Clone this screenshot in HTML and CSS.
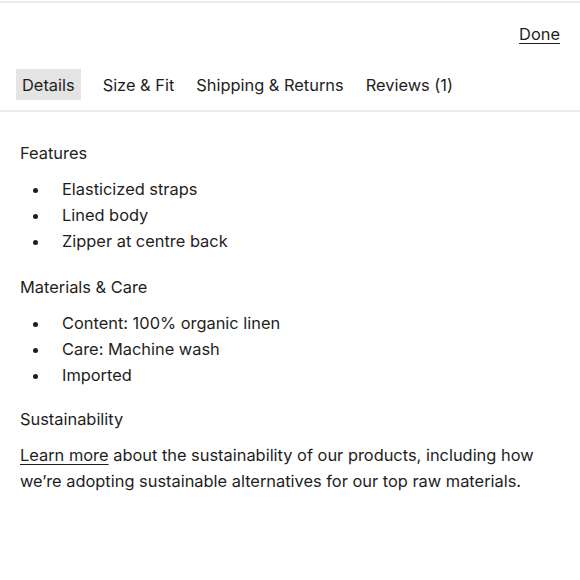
FILE: index.html
```html
<!DOCTYPE html>
<html lang="en">
<head>
<meta charset="utf-8">
<link rel="stylesheet" href="styles.css">
</head>
<body>
<div class="sheet">
  <div class="topbar">
    <a class="done" href="#">Done</a>
  </div>
  <nav class="tabs">
    <span class="tab active">Details</span>
    <span class="tab">Size &amp; Fit</span>
    <span class="tab">Shipping &amp; Returns</span>
    <span class="tab">Reviews (1)</span>
  </nav>
  <main class="content">
    <h3 class="heading">Features</h3>
    <ul class="list">
      <li>Elasticized straps</li>
      <li>Lined body</li>
      <li>Zipper at centre back</li>
    </ul>
    <h3 class="heading">Materials &amp; Care</h3>
    <ul class="list list-last">
      <li>Content: 100% organic linen</li>
      <li>Care: Machine wash</li>
      <li>Imported</li>
    </ul>
    <h3 class="heading">Sustainability</h3>
    <p class="para"><a href="#" class="link">Learn more</a> about the sustainability of our products, including how we’re adopting sustainable alternatives for our top raw materials.</p>
  </main>
</div>
</body>
</html>
```
FILE: styles.css
```css
html, body {
  margin: 0;
  padding: 0;
  background: #ffffff;
}
body {
  font-family: Inter, "Noto Sans", sans-serif;
  font-size: 16.4px;
  color: #1e1e1e;
}
.sheet {
  border-top: 2px solid #ebebeb;
  margin-top: 1px;
}
.topbar {
  display: flex;
  justify-content: flex-end;
  padding: 18px 20px 0 20px;
  line-height: 26px;
}
.done {
  color: #1e1e1e;
  text-decoration: underline;
  text-underline-offset: 3px;
}
.tabs {
  display: flex;
  gap: 10px;
  padding: 22px 16px 10px 16px;
  border-bottom: 2px solid #ececec;
}
.tab {
  height: 31px;
  line-height: 32px;
  padding: 0 6px;
}
.tab.active {
  background: #e4e4e4;
  margin-right: 6px;
}
.content {
  padding: 28px 20px 0 20px;
}
.heading {
  margin: 0 0 10px 0;
  font-weight: 400;
  font-size: 16.4px;
  line-height: 26px;
}
.list {
  list-style: none;
  margin: 0 0 20px 0;
  padding: 0;
}
.list-last {
  margin-bottom: 18px;
}
.list li {
  display: flex;
  align-items: center;
  line-height: 26px;
}
.list li::before {
  content: "";
  width: 5px;
  height: 5px;
  border-radius: 50%;
  background: #1e1e1e;
  margin: 3px 24px 0 13px;
  flex: none;
}
.para {
  margin: 0;
  line-height: 26px;
}
.link {
  color: #1e1e1e;
  text-decoration: underline;
  text-underline-offset: 3px;
}
```
